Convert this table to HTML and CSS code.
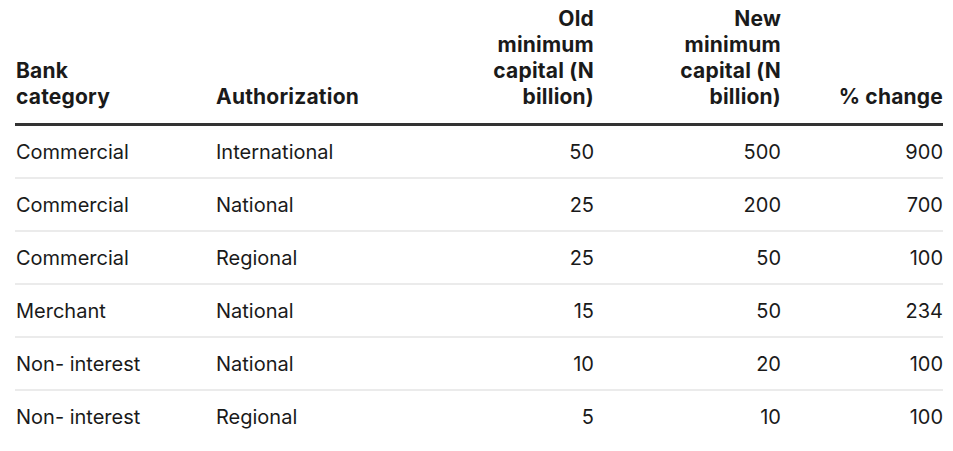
FILE: index.html
```html
<!DOCTYPE html>
<html lang="en">
<head>
<meta charset="utf-8">
<title>Bank capital</title>
<link rel="stylesheet" href="styles.css">
</head>
<body>
<table class="data">
  <colgroup>
    <col class="c1"><col class="c2"><col class="c3"><col class="c4"><col class="c5">
  </colgroup>
  <thead>
    <tr>
      <th class="left">Bank<br>category</th>
      <th class="left">Authorization</th>
      <th class="num">Old<br>minimum<br>capital (N<br>billion)</th>
      <th class="num">New<br>minimum<br>capital (N<br>billion)</th>
      <th class="num">% change</th>
    </tr>
  </thead>
  <tbody>
    <tr><td>Commercial</td><td>International</td><td class="num">50</td><td class="num">500</td><td class="num">900</td></tr>
    <tr><td>Commercial</td><td>National</td><td class="num">25</td><td class="num">200</td><td class="num">700</td></tr>
    <tr><td>Commercial</td><td>Regional</td><td class="num">25</td><td class="num">50</td><td class="num">100</td></tr>
    <tr><td>Merchant</td><td>National</td><td class="num">15</td><td class="num">50</td><td class="num">234</td></tr>
    <tr><td>Non- interest</td><td>National</td><td class="num">10</td><td class="num">20</td><td class="num">100</td></tr>
    <tr class="last"><td>Non- interest</td><td>Regional</td><td class="num">5</td><td class="num">10</td><td class="num">100</td></tr>
  </tbody>
</table>
</body>
</html>
```
FILE: styles.css
```css
html, body {
  margin: 0;
  padding: 0;
  background: #ffffff;
}
body {
  padding: 6px 10px 0 15px;
  font-family: Inter, Roboto, "Liberation Sans", sans-serif;
  color: #1a1a1a;
}
.data {
  width: 928px;
  border-collapse: collapse;
  table-layout: fixed;
}
.c1 { width: 200px; }
.c2 { width: 191px; }
.c3 { width: 188px; }
.c4 { width: 187px; }
.c5 { width: 162px; }
th, td {
  padding: 0 0 0 1px;
  font-size: 20px;
}
th {
  font-size: 21px;
  letter-spacing: 0.2px;
  font-weight: 700;
  line-height: 26px;
  vertical-align: bottom;
  padding-bottom: 13px;
  border-bottom: 3px solid #333333;
}
th.left { text-align: left; }
.num { text-align: right; }
td {
  height: 51px;
  line-height: 24px;
  vertical-align: middle;
  border-bottom: 2px solid #ebebeb;
}
tr.last td { border-bottom: none; }
```
